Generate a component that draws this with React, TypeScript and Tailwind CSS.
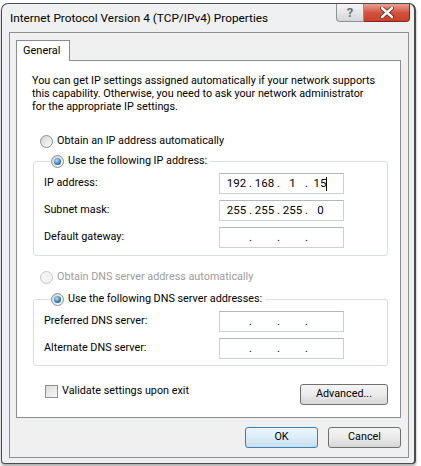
import { Fragment } from 'react'

const font = { fontFamily: 'Roboto, "Noto Sans", sans-serif' }

function Radio({ checked, disabled }: { checked?: boolean; disabled?: boolean }) {
  return (
    <span
      className={`shrink-0 w-[13px] h-[13px] rounded-full border flex items-center justify-center ${
        disabled
          ? 'border-[#c6c6c6] bg-[#f3f3f3]'
          : 'border-[#8c8c8c] bg-gradient-to-br from-[#d4d4d4] to-[#fbfbfb]'
      }`}
    >
      {checked && (
        <span className="w-[7px] h-[7px] rounded-full bg-[radial-gradient(circle_at_40%_35%,#b5e2f8,#2f78b8_60%,#1a4c7c)]" />
      )}
    </span>
  )
}

function IpBox({ parts, caret }: { parts?: string[]; caret?: boolean }) {
  const p = parts ?? ['', '', '', '']
  return (
    <div className="w-[125px] h-[21px] border border-[#ccd1d6] border-t-[#b3b8be] bg-white flex items-center pl-[5px] text-[11.5px]">
      {p.map((v, i) => (
        <Fragment key={i}>
          <span className="w-[23px] text-center">
            {v}
            {caret && i === 3 && <span className="inline-block w-px h-[14px] bg-black align-middle" />}
          </span>
          {i < 3 && <span className="w-[5px] text-center">.</span>}
        </Fragment>
      ))}
    </div>
  )
}

function Row({ label, children }: { label: string; children: React.ReactNode }) {
  return (
    <div className="flex items-center h-[21px]">
      <span className="w-[175px]">{label}</span>
      {children}
    </div>
  )
}

function Button({ label, primary, w }: { label: string; primary?: boolean; w: string }) {
  return (
    <div
      className={`${w} h-[21px] rounded-[3px] border flex items-center justify-center ${
        primary
          ? 'border-[#3c7fb1] bg-gradient-to-b from-[#eaf6fd] via-[#dcecf7] to-[#c6dff0]'
          : 'border-[#707070] bg-gradient-to-b from-[#f4f4f4] via-[#ebebeb] to-[#d6d6d6]'
      }`}
    >
      {label}
    </div>
  )
}

export default function App() {
  return (
    <div className="w-[421px] h-[466px] bg-white overflow-hidden text-[10.8px] text-black" style={font}>
      <div className="mt-[3px] ml-px w-[415px] h-[461px] rounded-t-[7px] rounded-b-[4px] border border-[#4b4b4b] border-r-2 bg-[#eef0f2] shadow-[0_2px_3px_rgba(0,0,0,0.35)] flex flex-col">
        {/* title bar */}
        <div className="h-[28px] flex justify-between shrink-0">
          <span className="pl-[8px] pt-[6px] text-[11.8px] whitespace-nowrap">Internet Protocol Version 4 (TCP/IPv4) Properties</span>
          <div className="flex mr-[4px] h-[18px]">
            <div className="w-[28px] h-[18px] rounded-bl-[4px] border border-t-0 border-[#8d9198] bg-gradient-to-b from-[#f4f5f6] to-[#d4d7db] flex items-center justify-center text-[#6a6f75] text-[13px] font-bold">
              ?
            </div>
            <div className="w-[46px] h-[18px] rounded-br-[4px] border border-t-0 border-l-0 border-[#7a2a22] bg-gradient-to-b from-[#e8a093] via-[#d2533e] to-[#c8402a] flex items-center justify-center">
              <svg width="14" height="11" viewBox="0 0 14 11">
                <path d="M2 1 L12 10 M12 1 L2 10" stroke="#5a1f18" strokeWidth="4" strokeLinecap="round" />
                <path d="M2 1 L12 10 M12 1 L2 10" stroke="#ffffff" strokeWidth="2.4" strokeLinecap="round" />
              </svg>
            </div>
          </div>
        </div>

        {/* client area */}
        <div className="ml-[7px] w-[400px] h-[426px] border border-[#8e8f8f] bg-[#f0f0f0] flex flex-col">
          <div className="ml-[6px] mt-[7px] w-[385px]">
            <div className="flex">
              <div className="relative z-10 w-[54px] h-[21px] border border-b-0 border-[#898c95] bg-white flex items-center pl-[6px] text-[11px]">
                General
              </div>
            </div>
            <div className="-mt-px h-[358px] border border-[#898c95] bg-white pl-[15px] pr-[12px] pt-[13px]">
              <p className="leading-[13px] whitespace-nowrap">
                You can get IP settings assigned automatically if your network supports
                <br />
                this capability. Otherwise, you need to ask your network administrator
                <br />
                for the appropriate IP settings.
              </p>

              <div className="mt-[20px] ml-[8px] h-[16px] flex items-center gap-[4px]">
                <Radio />
                <span>Obtain an IP address automatically</span>
              </div>

              <fieldset className="mt-[4px] ml-px w-[355px] border border-[#d5dfe5] rounded-[3px] pl-[10px] pb-[7px]">
                <legend className="ml-[7px] pr-[3px] h-[16px] flex items-center gap-[4px]">
                  <Radio checked />
                  <span>Use the following IP address:</span>
                </legend>
                <div className="pt-[4px] flex flex-col gap-[6px]">
                  <Row label="IP address:">
                    <IpBox parts={['192', '168', '1', '15']} caret />
                  </Row>
                  <Row label="Subnet mask:">
                    <IpBox parts={['255', '255', '255', '0']} />
                  </Row>
                  <Row label="Default gateway:">
                    <IpBox />
                  </Row>
                </div>
              </fieldset>

              <div className="mt-[13px] ml-[8px] h-[16px] flex items-center gap-[4px] text-[#9c9c9c]">
                <Radio disabled />
                <span>Obtain DNS server address automatically</span>
              </div>

              <fieldset className="mt-[6px] ml-px w-[355px] border border-[#d5dfe5] rounded-[3px] pl-[10px] pb-[6px]">
                <legend className="ml-[7px] pr-[3px] h-[16px] flex items-center gap-[4px]">
                  <Radio checked />
                  <span>Use the following DNS server addresses:</span>
                </legend>
                <div className="pt-[4px] flex flex-col gap-[6px]">
                  <Row label="Preferred DNS server:">
                    <IpBox />
                  </Row>
                  <Row label="Alternate DNS server:">
                    <IpBox />
                  </Row>
                </div>
              </fieldset>

              <div className="mt-[18px] ml-px w-[355px] flex items-center justify-between">
                <div className="ml-[12px] flex items-center gap-[4px] -mt-[7px]">
                  <span className="w-[13px] h-[13px] border border-[#8e8f8f] bg-gradient-to-br from-[#dcdcdc] to-[#f8f8f8]" />
                  <span>Validate settings upon exit</span>
                </div>
                <Button label="Advanced..." w="w-[88px]" />
              </div>
            </div>
          </div>

          <div className="mt-[9px] mr-[7px] flex justify-end gap-[10px]">
            <Button label="OK" primary w="w-[73px]" />
            <Button label="Cancel" w="w-[73px]" />
          </div>
        </div>
      </div>
    </div>
  )
}
